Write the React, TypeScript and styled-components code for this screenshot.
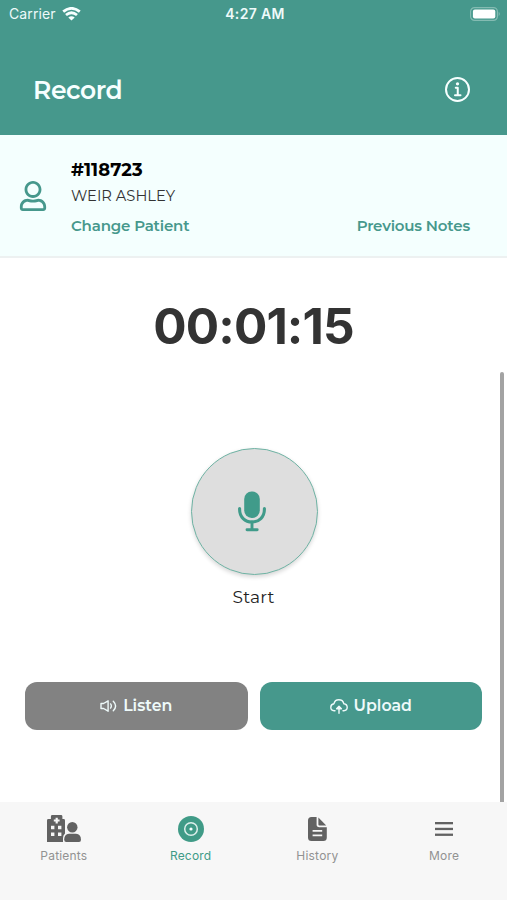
import React from 'react';
import styled, { createGlobalStyle } from 'styled-components';
import { FaRegUser } from 'react-icons/fa';
import { IoInformationCircleOutline } from 'react-icons/io5';

const TEAL = '#46988c';

const GlobalStyle = createGlobalStyle`
  * { box-sizing: border-box; }
  body { margin: 0; background: #fff; font-family: Montserrat, Inter, sans-serif; }
  button { border: 0; padding: 0; margin: 0; background: none; font: inherit; color: inherit; }
  svg { display: block; flex: none; }
`;

const Screen = styled.div`
  width: 507px;
  height: 900px;
  display: flex;
  flex-direction: column;
  overflow: hidden;
`;

const Label = styled.span<{ $size: number; $weight?: number; $spacing?: number }>`
  font-size: ${(p) => p.$size}px;
  font-weight: ${(p) => p.$weight ?? 400};
  letter-spacing: ${(p) => p.$spacing ?? 0}px;
  line-height: 20px;
  white-space: nowrap;
`;

const Header = styled.header`
  height: 135px;
  background: ${TEAL};
  color: #f7ffff;
`;

const StatusBar = styled.div`
  height: 28px;
  padding: 0 6px 0 9px;
  display: grid;
  grid-template-columns: 1fr auto 1fr;
  align-items: center;
  color: #eefafa;
  font-family: Inter, sans-serif;
`;

const Carrier = styled.div`
  display: flex;
  align-items: center;
  gap: 6px;
`;

const BatterySlot = styled.div`
  justify-self: end;
`;

const TitleRow = styled.div`
  height: 107px;
  padding: 17px 33px 0 33px;
  display: flex;
  align-items: center;
  justify-content: space-between;
`;

const PatientPanel = styled.section`
  height: 123px;
  background: #f4fffe;
  border-bottom: 2px solid #edf1f1;
  display: flex;
  color: #000;
`;

const Avatar = styled.div`
  width: 71px;
  padding: 46px 0 0 18px;
  color: ${TEAL};
`;

const PatientInfo = styled.div`
  flex: 1;
  padding: 25px 37px 0 0;
  display: flex;
  flex-direction: column;
`;

const PatientName = styled.div`
  margin-top: 6px;
  height: 20px;
  display: flex;
  color: #333;
`;

const Links = styled.div`
  margin-top: 10px;
  display: flex;
  justify-content: space-between;
  color: ${TEAL};
`;

const Body = styled.main`
  height: 544px;
  display: grid;
  grid-template-columns: 1fr 7px;
`;

const Recorder = styled.div`
  display: flex;
  flex-direction: column;
  align-items: center;
  padding-left: 7px;
`;

const Timer = styled.div`
  margin-top: 38px;
  height: 60px;
  font: 700 49.5px/60px Inter, sans-serif;
  letter-spacing: -0.9px;
  color: #333;
`;

const MicButton = styled.button`
  margin-top: 92px;
  margin-left: 1px;
  width: 127px;
  height: 127px;
  border-radius: 50%;
  border: 1px solid #6fb3a4;
  background: #dedede;
  box-shadow: 0 2px 4px rgba(0, 0, 0, 0.16);
  color: #409b8a;
  display: flex;
  align-items: center;
  justify-content: center;
  padding-right: 5px;
`;

const StartLabel = styled.div`
  margin-top: 12px;
  height: 22px;
  color: #222;
`;

const Actions = styled.div`
  align-self: stretch;
  margin: 73px 18px 0;
  display: grid;
  grid-template-columns: 1fr 1fr;
  gap: 12px;
`;

const ActionButton = styled.button<{ $tone: string }>`
  height: 48px;
  border-radius: 12px;
  background: ${(p) => p.$tone};
  color: #eefafa;
  display: flex;
  align-items: center;
  justify-content: center;
  gap: 6px;
`;

const ScrollThumb = styled.div`
  margin-top: 114px;
  width: 4px;
  border-radius: 2px 2px 0 0;
  background: #a3a3a3;
`;

const TabBar = styled.nav`
  height: 98px;
  background: #f7f7f7;
  display: grid;
  grid-template-columns: repeat(4, 1fr);
`;

const Tab = styled.button<{ $active?: boolean }>`
  display: flex;
  flex-direction: column;
  align-items: center;
  padding-left: 1px;
  color: ${(p) => (p.$active ? '#409b87' : '#929292')};
  font-family: Inter, sans-serif;
`;

const TabIcon = styled.div<{ $active?: boolean }>`
  height: 44px;
  padding-top: 9px;
  display: flex;
  align-items: center;
  color: ${(p) => (p.$active ? '#409b87' : '#626262')};
`;

const WifiIcon = () => (
  <svg width="19" height="15" viewBox="0 0 19 15" fill="none" stroke="#f7ffff" strokeWidth="2.8">
    <path d="M1.2 4.7Q9.5-2 17.8 4.7" />
    <path d="M4 8Q9.5 3.4 15 8" />
    <path d="M6.3 10.4Q9.5 7.9 12.7 10.4L9.5 13.6Z" fill="#f7ffff" stroke="none" />
  </svg>
);

const BatteryIcon = () => (
  <svg width="31" height="14" viewBox="0 0 31 14">
    <rect x=".6" y=".6" width="26.8" height="12.8" rx="4" fill="none" stroke="#84bbb2" strokeWidth="1.2" />
    <rect x="2.9" y="2.6" width="22.4" height="8.8" rx="2" fill="#fff" />
    <path d="M28.7 4.8Q30.8 7 28.7 9.2Z" fill="#84bbb2" />
  </svg>
);

const MicIcon = () => (
  <svg width="28" height="41" viewBox="0 0 28 41" fill="none" stroke="currentColor" strokeLinecap="round">
    <rect x="6.2" y=".5" width="15.6" height="26.5" rx="7.4" fill="currentColor" stroke="none" />
    <path d="M1.6 17.5V18.5C1.6 26 7 31 14 31S26.4 26 26.4 18.5V17.5" strokeWidth="3.1" />
    <path d="M14 31V38.5M9 38.8H19.2" strokeWidth="2.9" />
  </svg>
);

const SpeakerIcon = () => (
  <svg width="17" height="14" viewBox="0 0 17 14" fill="none" stroke="currentColor" strokeWidth="1.4" strokeLinejoin="round" strokeLinecap="round">
    <path d="M1 4.5H3.6L8.1 1.8V12.2L3.6 9.5H1Z" />
    <path d="M10.6 4.9Q12.1 7 10.6 9.1M13.3 2.2Q17.9 7 13.3 11.8" />
  </svg>
);

const UploadIcon = () => (
  <svg width="18" height="15" viewBox="0 0 18 15" fill="none" stroke="currentColor" strokeWidth="1.4" strokeLinecap="round" strokeLinejoin="round">
    <path d="M5 11.7H4.1C2.1 11.5.8 10.1.8 8.2S2.1 5 4 4.7C4.5 2.3 6.6.8 8.8.8C11.3.8 13.3 2.3 13.8 4.7C15.9 5 17.2 6.4 17.2 8.3S15.8 11.6 13.8 11.7H13" />
    <path d="M9 14.2V8.5" />
    <path d="M6.6 9.7L9 7.2L11.4 9.7Z" fill="currentColor" />
  </svg>
);

const HospitalIcon = () => (
  <svg width="34" height="27" viewBox="0 0 34 27" fill="currentColor">
    <path
      fillRule="evenodd"
      d="M5.3 0H14Q15.4 0 15.4 1.4V4H16.6Q18 4 18 5.4V18.6Q16 20.2 16 23V27H0V5.4Q0 4 1.4 4H3.9V1.4Q3.9 0 5.3 0Z
      M8.6 2.8V4.6H6.8V6.6H8.6V8.4H10.8V6.6H12.6V4.6H10.8V2.8Z
      M4 10.8V14.2H7.4V10.8Z M11 10.8V14.2H14.4V10.8Z
      M4 17.6V21H7.4V17.6Z M11 17.6V21H14.4V17.6Z"
    />
    <circle cx="25.3" cy="12.2" r="5.2" />
    <path d="M22 18.8H29Q34 19.2 34 24.8Q34 27 32 27H19.2Q17.2 27 17.2 24.8Q17.2 19.2 22 18.8Z" />
  </svg>
);

const DocumentIcon = () => (
  <svg width="19" height="24" viewBox="0 0 19 24" fill="currentColor">
    <path
      fillRule="evenodd"
      d="M3.5 0H8.6V7.5Q8.6 10.2 11.3 10.2H18.8V20.5Q18.8 24 15.3 24H3.5Q0 24 0 20.5V3.5Q0 0 3.5 0Z
      M4.6 12.9V14.7H14.2V12.9Z M4.6 17.4V19.2H14.2V17.4Z"
    />
    <path d="M10.4.6L18.2 8.4H11.4Q10.4 8.4 10.4 7.4Z" />
  </svg>
);

const RecordIcon = () => (
  <svg width="26" height="26" viewBox="0 0 26 26">
    <circle cx="13" cy="13" r="13" fill="currentColor" />
    <circle cx="13" cy="13" r="6.3" fill="none" stroke="#dcefeb" strokeWidth="1.5" />
    <circle cx="13" cy="13" r="1.6" fill="#f4fffe" />
  </svg>
);

const MenuIcon = () => (
  <svg width="18" height="14" viewBox="0 0 18 14" fill="currentColor">
    <rect width="18" height="2.3" />
    <rect y="5.8" width="18" height="2.3" />
    <rect y="11.6" width="18" height="2.3" />
  </svg>
);

const tabs = [
  { name: 'Patients', icon: <HospitalIcon /> },
  { name: 'Record', icon: <RecordIcon />, active: true },
  { name: 'History', icon: <DocumentIcon /> },
  { name: 'More', icon: <MenuIcon /> },
];

export default function App() {
  return (
    <Screen>
      <GlobalStyle />
      <Header>
        <StatusBar>
          <Carrier>
            <Label $size={14} $spacing={0.1}>Carrier</Label>
            <WifiIcon />
          </Carrier>
          <Label $size={14} $weight={600} $spacing={0.35}>4:27 AM</Label>
          <BatterySlot><BatteryIcon /></BatterySlot>
        </StatusBar>
        <TitleRow>
          <Label $size={25} $weight={600} $spacing={-0.4}>Record</Label>
          <IoInformationCircleOutline size={32} />
        </TitleRow>
      </Header>
      <PatientPanel>
        <Avatar><FaRegUser size={30} /></Avatar>
        <PatientInfo>
          <Label $size={18} $weight={700} $spacing={0.05}>#118723</Label>
          <PatientName><Label $size={14.7}>WEIR ASHLEY</Label></PatientName>
          <Links>
            <Label $size={15} $weight={600} $spacing={-0.17}>Change Patient</Label>
            <Label $size={15} $weight={600} $spacing={-0.17}>Previous Notes</Label>
          </Links>
        </PatientInfo>
      </PatientPanel>
      <Body>
        <Recorder>
          <Timer>00:01:15</Timer>
          <MicButton aria-label="Start"><MicIcon /></MicButton>
          <StartLabel><Label $size={17} $spacing={0.2}>Start</Label></StartLabel>
          <Actions>
            <ActionButton $tone="#828282">
              <SpeakerIcon />
              <Label $size={15.8} $weight={600}>Listen</Label>
            </ActionButton>
            <ActionButton $tone={TEAL}>
              <UploadIcon />
              <Label $size={15.8} $weight={600}>Upload</Label>
            </ActionButton>
          </Actions>
        </Recorder>
        <ScrollThumb />
      </Body>
      <TabBar>
        {tabs.map((t) => (
          <Tab key={t.name} $active={t.active}>
            <TabIcon $active={t.active}>{t.icon}</TabIcon>
            <Label $size={12} $spacing={0.2}>{t.name}</Label>
          </Tab>
        ))}
      </TabBar>
    </Screen>
  );
}
